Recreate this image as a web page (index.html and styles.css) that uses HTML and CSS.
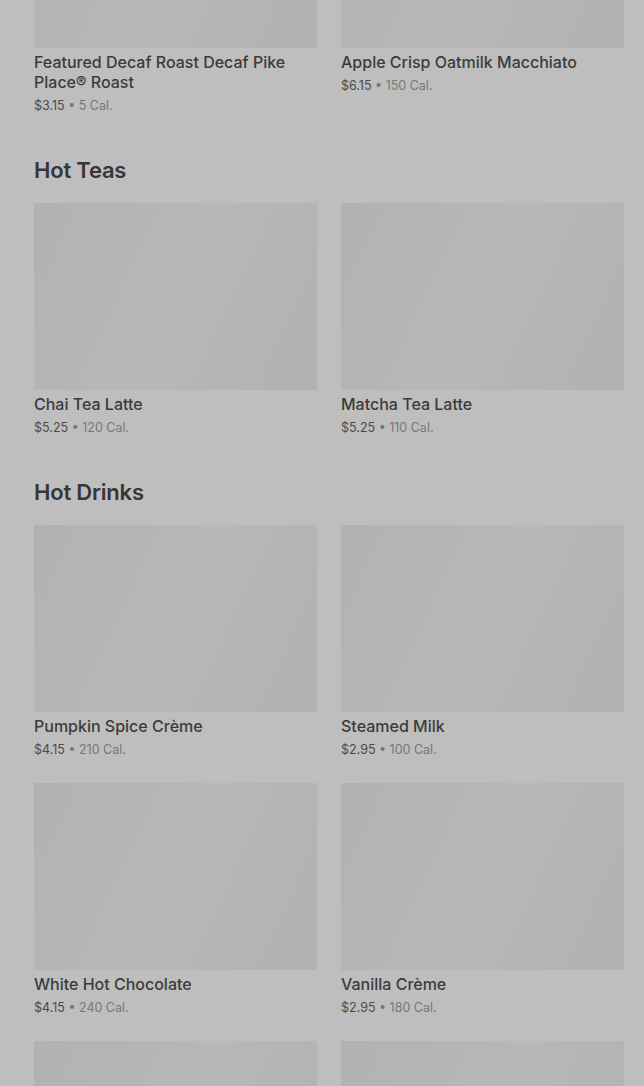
FILE: index.html
```html
<!DOCTYPE html>
<html lang="en">
<head>
  <meta charset="UTF-8" />
  <meta name="viewport" content="width=device-width, initial-scale=1" />
  <title>Menu – Hot Coffees</title>
  <link rel="stylesheet" href="styles.css">
</head>
<body>
  <!-- MENU (scrolled, dimmed under a modal backdrop) -->
  <div class="menu">

    <section class="menu-section">
      <div class="product-grid">
        <div class="product">
          <div class="product-image"></div>
          <div class="product-name">Featured Decaf Roast Decaf Pike Place® Roast</div>
          <div class="product-meta"><span class="price">$3.15</span> • 5 Cal.</div>
        </div>
        <div class="product">
          <div class="product-image"></div>
          <div class="product-name">Apple Crisp Oatmilk Macchiato</div>
          <div class="product-meta"><span class="price">$6.15</span> • 150 Cal.</div>
        </div>
      </div>
    </section>

    <section class="menu-section">
      <h2>Hot Teas</h2>
      <div class="product-grid">
        <div class="product">
          <div class="product-image"></div>
          <div class="product-name">Chai Tea Latte</div>
          <div class="product-meta"><span class="price">$5.25</span> • 120 Cal.</div>
        </div>
        <div class="product">
          <div class="product-image"></div>
          <div class="product-name">Matcha Tea Latte</div>
          <div class="product-meta"><span class="price">$5.25</span> • 110 Cal.</div>
        </div>
      </div>
    </section>

    <section class="menu-section">
      <h2>Hot Drinks</h2>
      <div class="product-grid">
        <div class="product">
          <div class="product-image"></div>
          <div class="product-name">Pumpkin Spice Crème</div>
          <div class="product-meta"><span class="price">$4.15</span> • 210 Cal.</div>
        </div>
        <div class="product">
          <div class="product-image"></div>
          <div class="product-name">Steamed Milk</div>
          <div class="product-meta"><span class="price">$2.95</span> • 100 Cal.</div>
        </div>
        <div class="product">
          <div class="product-image"></div>
          <div class="product-name">White Hot Chocolate</div>
          <div class="product-meta"><span class="price">$4.15</span> • 240 Cal.</div>
        </div>
        <div class="product">
          <div class="product-image"></div>
          <div class="product-name">Vanilla Crème</div>
          <div class="product-meta"><span class="price">$2.95</span> • 180 Cal.</div>
        </div>
        <!-- next row, only the top of the images is on screen -->
        <div class="product">
          <div class="product-image"></div>
        </div>
        <div class="product">
          <div class="product-image"></div>
        </div>
      </div>
    </section>

  </div>
</body>
</html>
```

FILE: styles.css
```css
body {
  margin: 0;
  font-family: Inter, 'Noto Sans', sans-serif;
  background-color: #bebebe;
  color: #3b3b3b;
  height: 1086px;
  overflow: hidden;
}

.menu {
  margin-top: -139px;
  padding: 0 20px 0 34px;
}

.menu-section h2 {
  margin: 41px 0 19px 0;
  font-size: 22px;
  line-height: 28px;
  font-weight: 600;
  letter-spacing: -0.2px;
  color: #363636;
}

.product-grid {
  display: grid;
  grid-template-columns: 1fr 1fr;
  column-gap: 24px;
  row-gap: 24px;
}

.product-image {
  height: 187px;
  background: linear-gradient(115deg, #b2b2b2 0%, #b5b5b5 30%, #b8b8b8 50%, #b5b5b5 70%, #b1b1b1 100%);
}

.product-name {
  margin-top: 4px;
  font-size: 16px;
  line-height: 20px;
  font-weight: 500;
  color: #3b3b3b;
}

.product-meta {
  margin-top: 5px;
  font-size: 12.5px;
  line-height: 18px;
  color: #777;
}
.product-meta .price {
  color: #4a4a4a;
}
```
